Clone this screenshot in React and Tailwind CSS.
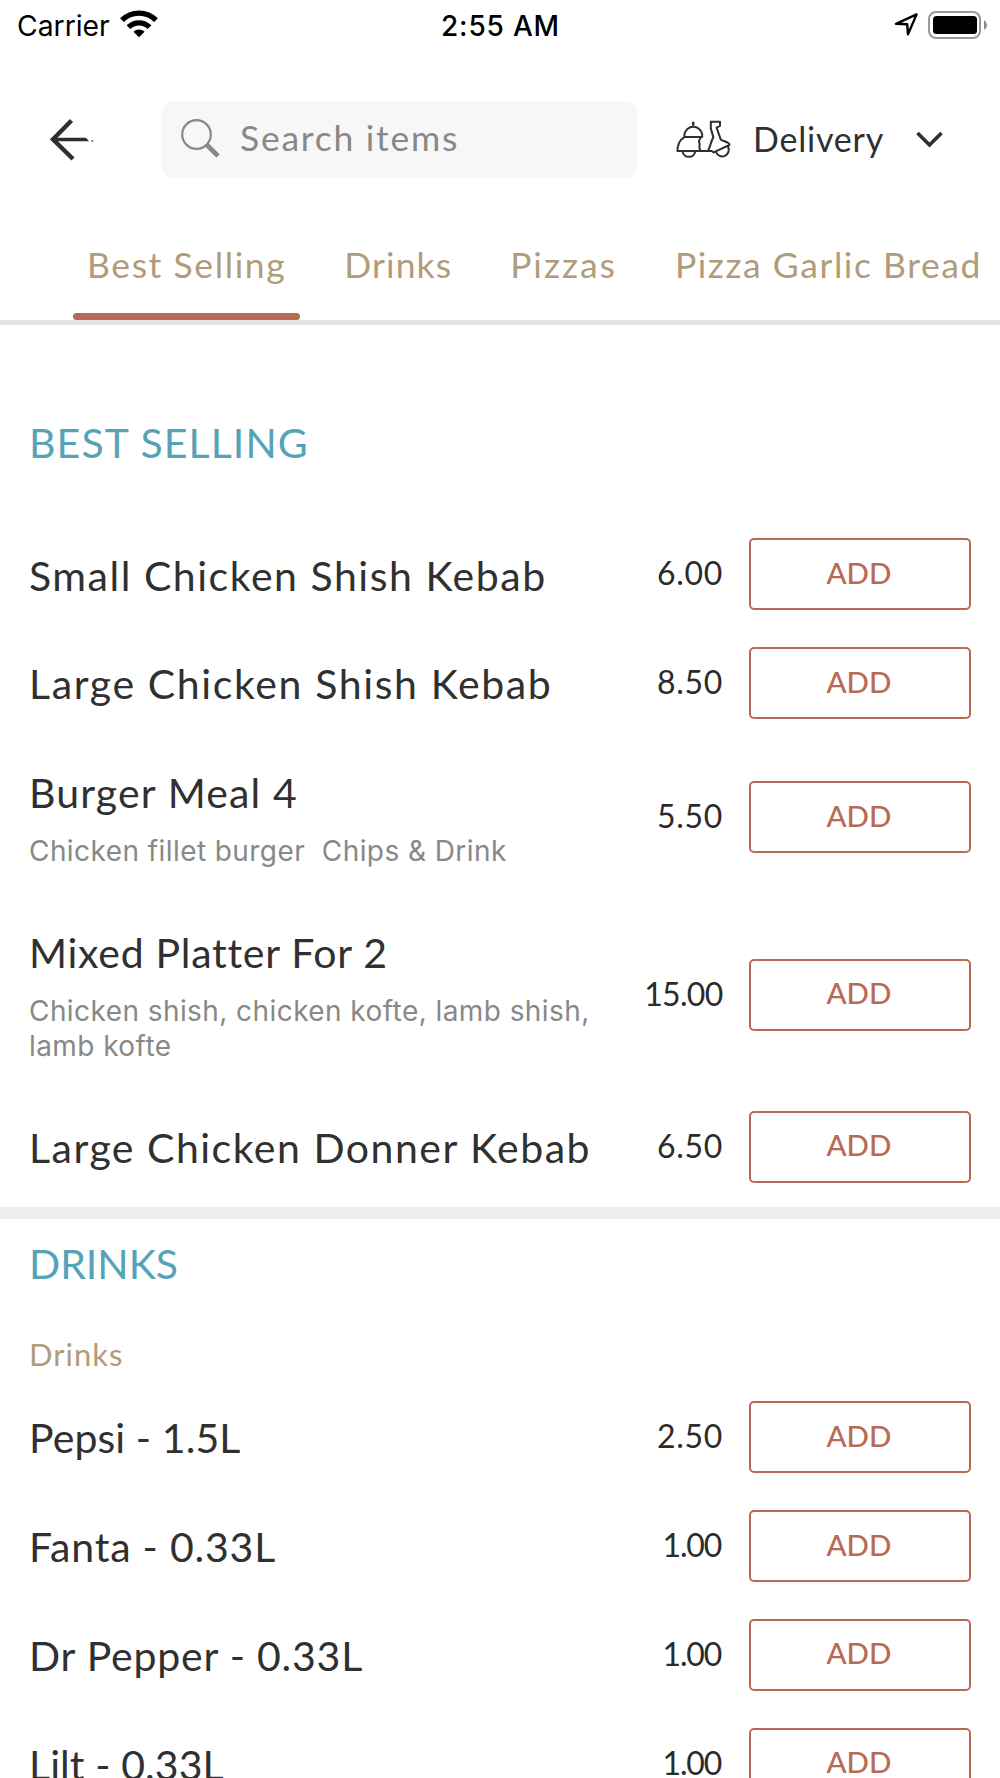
const tabs = [
    { name: 'Best Selling', active: true, style: 'tracking-[1.6px]' },
    { name: 'Drinks', style: 'tracking-[1.1px]' },
    { name: 'Pizzas', style: 'tracking-[2px]' },
    { name: 'Pizza Garlic Bread', style: 'tracking-[1.55px]' },
];

const bestSelling = [
    { name: 'Small Chicken Shish Kebab', price: '6.00', style: 'tracking-[1.53px]' },
    { name: 'Large Chicken Shish Kebab', price: '8.50', style: 'tracking-[1.63px]' },
    { name: 'Burger Meal 4', price: '5.50', style: 'tracking-[1.15px]', description: 'Chicken fillet burger  Chips & Drink' },
    {
        name: 'Mixed Platter For 2',
        price: '15.00',
        style: 'tracking-[0.73px]',
        priceStyle: 'tracking-[-0.7px] mr-[-0.5px]',
        description: 'Chicken shish, chicken kofte, lamb shish,\nlamb kofte',
    },
    { name: 'Large Chicken Donner Kebab', price: '6.50', style: 'tracking-[1.5px]' },
];

const drinks = [
    { name: 'Pepsi - 1.5L', price: '2.50', style: 'tracking-[0.1px]' },
    { name: 'Fanta - 0.33L', price: '1.00', style: 'tracking-[0.8px]', priceStyle: 'tracking-[-1.2px] mr-[1px]' },
    { name: 'Dr Pepper - 0.33L', price: '1.00', style: 'tracking-[0.8px]', priceStyle: 'tracking-[-1.2px] mr-[1px]' },
    { name: 'Lilt - 0.33L', price: '1.00', style: 'tracking-[0.1px]', priceStyle: 'tracking-[-1.2px] mr-[1px]' },
];

function StatusBar() {
    return (
        <div className="h-[50px] pl-[17px] pr-[13px] grid grid-cols-3 items-center font-['Inter',sans-serif] text-black">
            <div className="flex items-center gap-[10px]">
                <span className="pt-[1px] text-[28.3px] leading-[50px]">Carrier</span>
                <svg width="38" height="28" viewBox="0 0 38 28" fill="none" className="-mt-[3px]">
                    <path d="M2 10.2 A24 24 0 0 1 36 10.2" stroke="#000" strokeWidth="5.4" />
                    <path d="M8.4 17.2 A15 15 0 0 1 29.6 17.2" stroke="#000" strokeWidth="5.2" />
                    <path d="M19 27.3 L13.4 21.8 A8 8 0 0 1 24.6 21.8 Z" fill="#000" />
                </svg>
            </div>
            <div className="-ml-[3px] pt-[1px] text-center text-[28px] leading-[50px] font-medium tracking-[0.8px]">2:55 AM</div>
            <div className="flex items-center justify-end gap-[9px] -mt-[2px]">
                <svg width="25" height="25" viewBox="0 0 25 25" fill="none">
                    <path d="M2 11.8 L22.6 2.4 L14 22.4 L13.2 12.2 Z" stroke="#000" strokeWidth="2.4" strokeLinejoin="round" />
                </svg>
                <svg width="59" height="28" viewBox="0 0 59 28" fill="none">
                    <rect x="1" y="1" width="51" height="26" rx="7" stroke="#9a9a9a" strokeWidth="2" />
                    <rect x="5" y="5" width="44" height="18" rx="3.5" fill="#000" />
                    <path d="M56 9 Q59 11 59 14 Q59 17 56 19 Z" fill="#8a8a8a" />
                </svg>
            </div>
        </div>
    );
}

function Scooter() {
    return (
        <svg width="56" height="40" viewBox="0 0 56 40" fill="none" stroke="#2f2f2f" strokeWidth="2" strokeLinejoin="round" strokeLinecap="round">
            <path d="M8.4 16.5 V14.5 A9 9 0 0 1 26.2 14.5 V17 H8.4" />
            <path d="M17.2 4.6 V2.8" strokeWidth="2.6" />
            <path d="M8 17.4 C4 20 1.4 25 1.4 31 H35.6 L37.6 32.4 L53.4 25 C54.4 22.8 48.5 21.6 44.8 19.6 L40.6 7.6 L44 5.8 V1.8 H34.8 V8.4 L37.4 17.4 C34.8 21 34.6 26.4 32.2 30.4" />
            <path d="M24.8 17.6 C23 19.6 22.6 22 23.8 24 C22.8 27 23.6 29.4 25 31" />
            <path d="M6.6 31.6 A6.4 6.4 0 0 0 19.2 31.6" />
            <path d="M40 32 A6.6 6.6 0 1 0 52 26.6" />
        </svg>
    );
}

function Header() {
    return (
        <header className="h-[180px] pt-[51px] pl-[50px] flex items-start text-[#303030] font-['Lato',sans-serif]">
            <div className="h-[78px] flex items-center">
                <svg width="44" height="44" viewBox="0 0 44 44" fill="none">
                    <path d="M21.5 2.5 L3 21.3 L23 41" stroke="#2f2f2f" strokeWidth="4.4" />
                    <path d="M2 19.8 H36 L39 23.3 H2 Z" fill="#2f2f2f" />
                    <path d="M41.5 23 H43" stroke="#2f2f2f" strokeWidth="1.5" />
                </svg>
            </div>
            <div className="ml-[68px] w-[475px] h-[77px] rounded-[12px] bg-[#f7f7f7] flex items-center pl-[18px]">
                <svg width="42" height="42" viewBox="0 0 42 42" fill="none" stroke="#888" className="-mt-[1px]">
                    <circle cx="16.5" cy="16.5" r="14.3" strokeWidth="2.2" />
                    <path d="M26.5 26.5 L38 38" strokeWidth="4.6" />
                </svg>
                <span className="ml-[18px] -mt-[3px] text-[35.5px] leading-[50px] tracking-[1.75px] text-[#888]">Search items</span>
            </div>
            <div className="h-[77px] ml-[39px] flex items-center">
                <Scooter />
                <span className="ml-[21px] -mt-[2px] w-[129px] text-[34px] leading-[50px] tracking-[0.8px]">Delivery</span>
                <svg width="30" height="20" viewBox="0 0 30 20" fill="none" className="ml-[33px]">
                    <path d="M2.5 3 L14.5 15 L26.5 3" stroke="#2f2f2f" strokeWidth="3.6" />
                </svg>
            </div>
        </header>
    );
}

function Tabs() {
    return (
        <nav className="h-[95px] pl-[73px] flex border-b-[5px] border-[#e5e5e5] overflow-hidden font-['Lato',sans-serif]">
            {tabs.map(tab => (
                <div key={tab.name} className="mr-[30px] last:mr-0 shrink-0 flex flex-col justify-between">
                    <span className={`px-[14px] pt-[10px] text-[35.5px] leading-[50px] text-[#b09c7a] ${tab.style}`}>{tab.name}</span>
                    {tab.active && <div className="h-[7px] rounded-full bg-[#b96a55]"></div>}
                </div>
            ))}
        </nav>
    );
}

function MenuRow({ item }) {
    return (
        <div className="pl-[29px] pr-[29px] flex items-center">
            <div className="flex-1 pt-[30.5px] pb-[28.3px]">
                <h3 className={`text-[41px] leading-[50px] text-[#303030] whitespace-nowrap ${item.style}`}>{item.name}</h3>
                {item.description && (
                    <p className="mt-[16px] font-['Inter',sans-serif] text-[28px] leading-[35px] tracking-[0.43px] text-[#888] whitespace-pre">{item.description}</p>
                )}
            </div>
            <span className={`text-[32px] leading-[50px] text-[#2b2b2b] -mt-[2px] ${item.priceStyle || 'tracking-[0.7px] mr-[-1px]'}`}>{item.price}</span>
            <button className="ml-[27px] w-[222px] h-[72px] rounded-[5px] border-2 border-[#b96a55] text-[29.5px] font-medium text-[#b96a55] pb-[3px] pr-[2px]">
                ADD
            </button>
        </div>
    );
}

export default function App() {
    return (
        <div className="w-[1000px] h-[1778px] overflow-hidden bg-white">
            <StatusBar />
            <Header />
            <Tabs />
            <main className="font-['Lato',sans-serif]">
                <section className="pt-[93px] pb-[6px]">
                    <h2 className="pl-[29px] mb-[52px] text-[41px] leading-[50px] tracking-[1.1px] text-[#56a3b8]">BEST SELLING</h2>
                    {bestSelling.map(item => <MenuRow key={item.name} item={item} />)}
                </section>
                <section className="border-t-[12px] border-[#eee] pt-[20px]">
                    <h2 className="pl-[29px] text-[41px] leading-[50px] text-[#56a3b8]">DRINKS</h2>
                    <h4 className="pl-[29px] mt-[45px] mb-[9px] text-[31px] leading-[40px] tracking-[1px] text-[#b09c7a]">Drinks</h4>
                    {drinks.map(item => <MenuRow key={item.name} item={item} />)}
                </section>
            </main>
        </div>
    );
}
